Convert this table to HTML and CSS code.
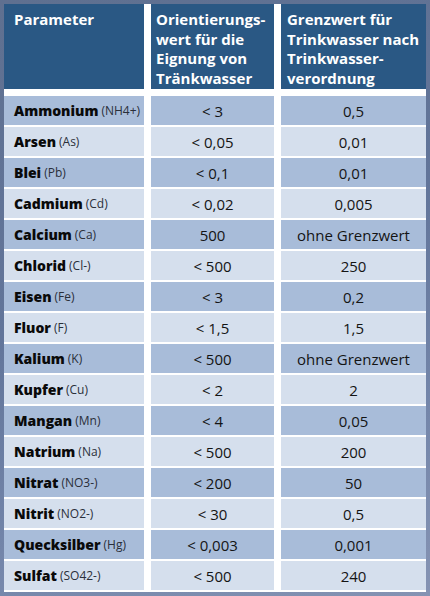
FILE: index.html
```html
<!DOCTYPE html>
<html lang="de">
<head>
<meta charset="utf-8">
<link rel="stylesheet" href="styles.css">
</head>
<body>
<div class="table">
  <div class="head c1">Parameter</div>
  <div class="head c2">Orientierungs-<br>wert für die<br>Eignung von<br>Tränkwasser</div>
  <div class="head c3">Grenzwert für<br>Trinkwasser nach<br>Trinkwasser-<br>verordnung</div>

  <div class="cell name dark first"><b>Ammonium</b> <span>(NH4+)</span></div><div class="cell val dark first">&lt; 3</div><div class="cell val dark first">0,5</div>
  <div class="cell name light"><b>Arsen</b> <span>(As)</span></div><div class="cell val light">&lt; 0,05</div><div class="cell val light">0,01</div>
  <div class="cell name dark"><b>Blei</b> <span>(Pb)</span></div><div class="cell val dark">&lt; 0,1</div><div class="cell val dark">0,01</div>
  <div class="cell name light"><b>Cadmium</b> <span>(Cd)</span></div><div class="cell val light">&lt; 0,02</div><div class="cell val light">0,005</div>
  <div class="cell name dark"><b>Calcium</b> <span>(Ca)</span></div><div class="cell val dark">500</div><div class="cell val dark">ohne Grenzwert</div>
  <div class="cell name light"><b>Chlorid</b> <span>(Cl-)</span></div><div class="cell val light">&lt; 500</div><div class="cell val light">250</div>
  <div class="cell name dark"><b>Eisen</b> <span>(Fe)</span></div><div class="cell val dark">&lt; 3</div><div class="cell val dark">0,2</div>
  <div class="cell name light"><b>Fluor</b> <span>(F)</span></div><div class="cell val light">&lt; 1,5</div><div class="cell val light">1,5</div>
  <div class="cell name dark"><b>Kalium</b> <span>(K)</span></div><div class="cell val dark">&lt; 500</div><div class="cell val dark">ohne Grenzwert</div>
  <div class="cell name light"><b>Kupfer</b> <span>(Cu)</span></div><div class="cell val light">&lt; 2</div><div class="cell val light">2</div>
  <div class="cell name dark"><b>Mangan</b> <span>(Mn)</span></div><div class="cell val dark">&lt; 4</div><div class="cell val dark">0,05</div>
  <div class="cell name light"><b>Natrium</b> <span>(Na)</span></div><div class="cell val light">&lt; 500</div><div class="cell val light">200</div>
  <div class="cell name dark"><b>Nitrat</b> <span>(NO3-)</span></div><div class="cell val dark">&lt; 200</div><div class="cell val dark">50</div>
  <div class="cell name light"><b>Nitrit</b> <span>(NO2-)</span></div><div class="cell val light">&lt; 30</div><div class="cell val light">0,5</div>
  <div class="cell name dark"><b>Quecksilber</b> <span>(Hg)</span></div><div class="cell val dark">&lt; 0,003</div><div class="cell val dark">0,001</div>
  <div class="cell name light"><b>Sulfat</b> <span>(SO42-)</span></div><div class="cell val light">&lt; 500</div><div class="cell val light">240</div>
</div>
</body>
</html>
```
FILE: styles.css
```css
html, body {
  margin: 0;
  padding: 0;
}
body {
  width: 430px;
  height: 596px;
  overflow: hidden;
  background: linear-gradient(160deg, #5f7090 0%, #62759a 45%, #7486aa 75%, #8593b3 100%);
  font-family: "Open Sans", "DejaVu Sans", sans-serif;
  padding: 4px 4px 0 4px;
  box-sizing: border-box;
}
.table {
  width: 422px;
  background: #ffffff;
  display: grid;
  grid-template-columns: 140px 123px 145px;
  column-gap: 7px;
  row-gap: 2px;
  grid-template-rows: 85px 34px repeat(15, 29px);
  padding-bottom: 2px;
}
.head {
  background: #2a5884;
  color: #ffffff;
  font-weight: 700;
  font-size: 15px;
  line-height: 19.5px;
  padding: 6px 0 0 6px;
}
.head.c1 { padding-left: 10px; }
.head.c2 { padding-left: 5px; }
.cell {
  display: flex;
  align-items: center;
  color: #141414;
  font-size: 15px;
  white-space: nowrap;
}
.cell.first {
  margin-top: 5px;
}
.cell.name {
  padding-left: 10px;
  font-size: 14px;
}
.cell.name b {
  font-weight: 800;
  color: #0a0a0a;
  margin-right: 3px;
}
.cell.name span {
  font-size: 12px;
  color: #2a2f3a;
}
.cell.val {
  justify-content: center;
}
.dark { background: #a8bcd9; }
.light { background: #d5dfed; }
```
